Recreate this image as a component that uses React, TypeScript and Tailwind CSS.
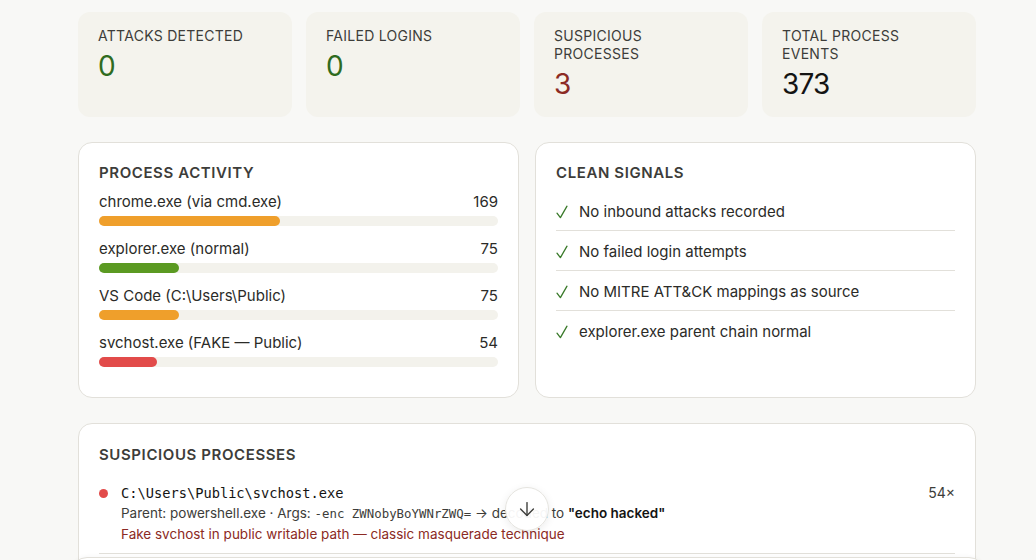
import { ArrowDown } from 'lucide-react';

const TOTAL_EVENTS = 373;

const stats = [
  { label: 'Attacks detected', value: '0', tone: 'text-[#2f6b1f]' },
  { label: 'Failed logins', value: '0', tone: 'text-[#2f6b1f]' },
  { label: 'Suspicious processes', value: '3', tone: 'text-[#8c2a24]' },
  { label: 'Total process events', value: String(TOTAL_EVENTS), tone: 'text-[#141413]' },
];

const activity = [
  { name: 'chrome.exe (via cmd.exe)', count: 169, bar: 'bg-[#ef9f2b]' },
  { name: 'explorer.exe (normal)', count: 75, bar: 'bg-[#5b9a22]' },
  { name: 'VS Code (C:\\Users\\Public)', count: 75, bar: 'bg-[#ef9f2b]' },
  { name: 'svchost.exe (FAKE — Public)', count: 54, bar: 'bg-[#e24b4a]' },
];

const cleanSignals = [
  'No inbound attacks recorded',
  'No failed login attempts',
  'No MITRE ATT&CK mappings as source',
  'explorer.exe parent chain normal',
];

const sans = "font-['Inter','Noto_Sans',sans-serif]";
const mono = "font-['DejaVu_Sans_Mono','Liberation_Mono',monospace]";

const StatCard = ({ label, value, tone }: { label: string; value: string; tone: string }) => (
  <div className="rounded-[12px] bg-[#f4f3ed] px-5 pt-[15px] pb-[16px]">
    <p className="text-[14px] leading-[18px] uppercase tracking-[0.02em] text-[#3d3d3a]">{label}</p>
    <p className={`mt-[4px] text-[28px] leading-[34px] tracking-[-0.03em] ${tone}`}>{value}</p>
  </div>
);

const PanelTitle = ({ children }: { children: string }) => (
  <h2 className="mb-[6px] text-[15px] leading-[24px] font-semibold uppercase tracking-[0.04em] text-[#3d3d3a]">
    {children}
  </h2>
);

const Check = () => (
  <svg width="12" height="14" viewBox="0 0 12 14" className="shrink-0 text-[#3a7a2a]">
    <path d="M1 8.2 L4.4 12.6 L11 1.2" fill="none" stroke="currentColor" strokeWidth="1.3" strokeLinecap="round" strokeLinejoin="round" />
  </svg>
);

export default function App() {
  return (
    <div className={`relative h-[560px] w-full overflow-hidden bg-[#f8f8f6] ${sans}`}>
      <div className="ml-[78px] w-[898px] pt-[12px]">
        <div className="grid grid-cols-4 gap-[14px]">
          {stats.map((s) => (
            <StatCard key={s.label} {...s} />
          ))}
        </div>

        <div className="mt-[25px] grid grid-cols-2 gap-4">
          <section className="rounded-[14px] border border-[#e2e0da] bg-white px-5 pt-[18px] pb-[18px]">
            <PanelTitle>Process activity</PanelTitle>
            {activity.map((row) => (
              <div key={row.name} className="mb-3">
                <div className="flex justify-between text-[15px] leading-[22px] text-[#2b2b28]">
                  <span>{row.name}</span>
                  <span>{row.count}</span>
                </div>
                <div className="mt-[3px] h-[10px] rounded-full bg-[#f3f2ec]">
                  <div
                    className={`h-full rounded-full ${row.bar}`}
                    style={{ width: `${(row.count / TOTAL_EVENTS) * 100}%` }}
                  />
                </div>
              </div>
            ))}
          </section>

          <section className="rounded-[14px] border border-[#e2e0da] bg-white px-5 pt-[18px]">
            <PanelTitle>Clean signals</PanelTitle>
            <ul>
              {cleanSignals.map((item, i) => (
                <li
                  key={item}
                  className={`flex items-center gap-[11px] pt-[10px] pb-[7px] text-[15px] leading-[22px] text-[#2b2b28] ${
                    i < cleanSignals.length - 1 ? 'border-b border-[#e2e0da]' : ''
                  }`}
                >
                  <Check />
                  <span>{item}</span>
                </li>
              ))}
            </ul>
          </section>
        </div>

        <section className="mt-[25px] rounded-[14px] border border-[#e2e0da] bg-white px-5 pt-[19px] pb-5">
          <PanelTitle>Suspicious processes</PanelTitle>
          <div className="flex items-start gap-[13px] border-b border-[#e2e0da] pt-[10px] pb-[9px]">
            <span className="mt-[6px] h-[9px] w-[9px] shrink-0 rounded-full bg-[#e24b4a]" />
            <div className="flex-1 text-[13.5px] leading-[20px] text-[#3d3d3a]">
              <p className={`${mono} text-[13.7px] text-[#141413]`}>C:\Users\Public\svchost.exe</p>
              <p>
                Parent: powershell.exe · Args: <span className={`${mono} text-[12.4px]`}>-enc ZWNobyBoYWNrZWQ=</span> → decoded
                to <b className="font-semibold text-[#141413]">"echo hacked"</b>
              </p>
              <p className="text-[#8c2a24]">Fake svchost in public writable path — classic masquerade technique</p>
            </div>
            <span className="text-[14px] leading-[20px] text-[#3d3d3a]">54×</span>
          </div>
        </section>
      </div>

      <button
        type="button"
        className="absolute left-[505px] top-[487px] flex h-[44px] w-[44px] items-center justify-center rounded-full border border-[#e5e4df] bg-white/95 text-[#3d3d3a] shadow-[0_2px_8px_rgba(0,0,0,0.08)]"
      >
        <ArrowDown size={22} strokeWidth={1.5} />
      </button>

      <div className="absolute left-[71px] top-[557px] h-[40px] w-[914px] rounded-[16px] border border-[#e2e0da] bg-white shadow-[0_-1px_4px_rgba(0,0,0,0.03)]" />
    </div>
  );
}
